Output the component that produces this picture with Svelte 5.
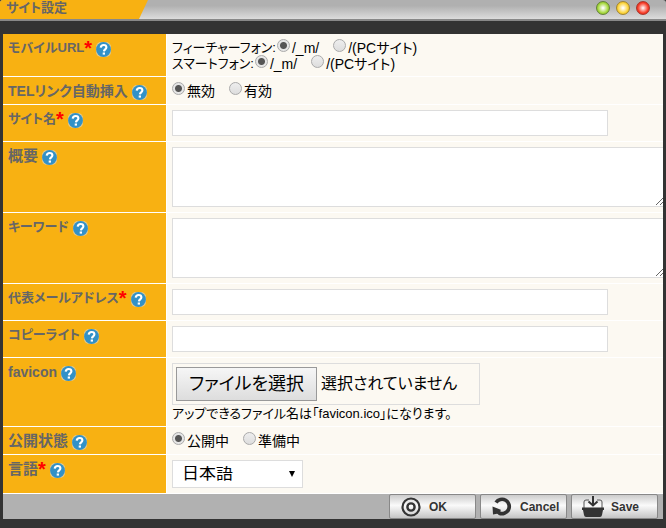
<script lang="ts">
  let mobile = $state("m");
  let smart = $state("m");
  let telLink = $state("off");
  let status = $state("open");
  let fileName = $state("");
  let fileInput: HTMLInputElement;

  const handleFile = () => {
    fileName = fileInput.files?.[0]?.name ?? "";
  };
</script>

{#snippet help()}
  <svg class="help" viewBox="0 0 15 15" aria-hidden="true">
    <rect width="15" height="15" rx="5" fill="#e3c98c" />
    <circle cx="7.5" cy="7.5" r="7.4" fill="#3291c7" />
    <path d="M4.7 5.6C4.9 3.8 6 3 7.6 3c1.7 0 2.8 1 2.8 2.3 0 2-2.3 2-2.5 4" fill="none" stroke="#fff" stroke-width="2.1" />
    <rect x="6.7" y="10.5" width="2.3" height="2.1" fill="#fff" />
  </svg>
{/snippet}

<main>
  <header>
    <h1>サイト設定</h1>
    <div class="lights">
      <button type="button" class="light green" aria-label="最小化"></button>
      <button type="button" class="light yellow" aria-label="最大化"></button>
      <button type="button" class="light red" aria-label="閉じる"></button>
    </div>
  </header>

  <form onsubmit={(e) => e.preventDefault()}>
    <div class="row">
      <div class="label kana">モバイルURL<em>*</em>{@render help()}</div>
      <div class="field">
        <div class="line" role="radiogroup" aria-label="フィーチャーフォン">
          <span class="caption">フィーチャーフォン:</span>
          <label><input type="radio" value="m" bind:group={mobile} />/_m/</label>
          <label><input type="radio" value="pc" bind:group={mobile} />/(PCサイト)</label>
        </div>
        <div class="line" role="radiogroup" aria-label="スマートフォン">
          <span class="caption">スマートフォン:</span>
          <label><input type="radio" value="m" bind:group={smart} />/_m/</label>
          <label><input type="radio" value="pc" bind:group={smart} />/(PCサイト)</label>
        </div>
      </div>
    </div>

    <div class="row">
      <div class="label">TELリンク自動挿入{@render help()}</div>
      <div class="field">
        <div class="line single">
          <label><input type="radio" value="off" bind:group={telLink} />無効</label>
          <label><input type="radio" value="on" bind:group={telLink} />有効</label>
        </div>
      </div>
    </div>

    <div class="row">
      <label class="label kana" for="name">サイト名<em>*</em>{@render help()}</label>
      <div class="field"><input id="name" class="text" type="text" /></div>
    </div>

    <div class="row">
      <label class="label kanji" for="summary">概要{@render help()}</label>
      <div class="field"><textarea id="summary"></textarea></div>
    </div>

    <div class="row">
      <label class="label kana" for="keywords">キーワード{@render help()}</label>
      <div class="field"><textarea id="keywords"></textarea></div>
    </div>

    <div class="row">
      <label class="label kana" for="mail">代表メールアドレス<em>*</em>{@render help()}</label>
      <div class="field"><input id="mail" class="text" type="email" /></div>
    </div>

    <div class="row">
      <label class="label kana" for="copyright">コピーライト{@render help()}</label>
      <div class="field"><input id="copyright" class="text" type="text" /></div>
    </div>

    <div class="row">
      <label class="label" for="favicon">favicon{@render help()}</label>
      <div class="field">
        <div class="file">
          <input id="favicon" type="file" accept=".ico" hidden bind:this={fileInput} onchange={handleFile} />
          <button type="button" onclick={() => fileInput.click()}>ファイルを選択</button>
          <span>{fileName || "選択されていません"}</span>
        </div>
        <div class="line note">アップできるファイル名は「favicon.ico」になります。</div>
      </div>
    </div>

    <div class="row">
      <div class="label kanji">公開状態{@render help()}</div>
      <div class="field">
        <div class="line single">
          <label><input type="radio" value="open" bind:group={status} />公開中</label>
          <label><input type="radio" value="wait" bind:group={status} />準備中</label>
        </div>
      </div>
    </div>

    <div class="row">
      <label class="label kanji" for="lang">言語<em>*</em>{@render help()}</label>
      <div class="field">
        <div class="select">
          <select id="lang">
            <option>日本語</option>
            <option>English</option>
          </select>
        </div>
      </div>
    </div>

    <footer>
      <button type="submit">
        <svg viewBox="0 0 22 22" aria-hidden="true">
          <circle cx="11" cy="11" r="8.5" fill="none" stroke="#333" stroke-width="2.2" />
          <circle cx="11" cy="11" r="3.6" fill="none" stroke="#333" stroke-width="2.4" />
        </svg>
        <span>OK</span>
      </button>
      <button type="button">
        <svg viewBox="0 0 22 22" aria-hidden="true">
          <path d="M5 6.5A7.2 7.2 0 1 1 8 17" fill="none" stroke="#333" stroke-width="3.7" />
          <path d="M1.5 10.5l8.3 3.3-1.300 5-2.500-1-4 .7z" fill="#333" />
        </svg>
        <span>Cancel</span>
      </button>
      <button type="button">
        <svg viewBox="0 0 22 22" aria-hidden="true">
          <path d="M2 12V6q0-2 2-2h3M15 4h3q2 0 2 2v6" fill="none" stroke="#555" stroke-width="1" />
          <path d="M0 11.5h22v2.5h-1l-1 5q-.4 2-2 2H4q-1.6 0-2-2l-1-5H0z" fill="#333" />
          <path d="M11 0v9M6.5 5.5L11 9.5l4.5-4" fill="none" stroke="#333" stroke-width="2" />
        </svg>
        <span>Save</span>
      </button>
    </footer>
  </form>
</main>

<style>
  :global(body) {
    background: #333;
  }

  main {
    font-family: "Liberation Sans", "Noto Sans CJK JP", sans-serif;
    font-feature-settings: "palt";
    font-size: 14px;
    line-height: 16px;
    color: #000;
  }

  header {
    display: flex;
    justify-content: space-between;
    height: 19px;
    border-bottom: 2px solid #888;
    background: linear-gradient(#b0b0b0 0, #b0b0b0 30%, #dcdcdc 100%);
    border-radius: 3px 3px 0 0;
    overflow: hidden;
  }

  h1 {
    box-sizing: border-box;
    width: 148px;
    margin: 0;
    padding-left: 6px;
    background: #f8b112;
    clip-path: polygon(0 0, 100% 0, 139px 100%, 0 100%);
    color: #666;
    font-size: 13px;
    font-weight: 700;
    line-height: 16px;
  }

  .lights {
    display: flex;
    gap: 6px;
    padding: 1px 16px 0 0;
  }

  .light {
    width: 14px;
    height: 14px;
    padding: 0;
    border: 1px solid;
    border-radius: 50%;
  }

  .green {
    border-color: #64803a;
    background: radial-gradient(#fff 5%, #a6d83c 60%, #6b9d18);
  }

  .yellow {
    border-color: #a08532;
    background: radial-gradient(#fff 5%, #fbd43a 60%, #d29a0c);
  }

  .red {
    border-color: #a8362c;
    background: radial-gradient(#fff 0, #f83d28 60%, #c8130a);
  }

  form {
    margin: 13px 3px 0;
  }

  .row {
    display: grid;
    grid-template-columns: 163px 1fr;
    column-gap: 1px;
    border-bottom: 1px solid #fff;
    background: #fff;
  }

  .label {
    display: flex;
    align-items: flex-start;
    padding: 6px 0 0 5px;
    background: #f8b112;
    color: #666;
    font-weight: 700;
  }

  .kana {
    font-size: 13px;
  }

  .kanji {
    font-size: 15px;
  }

  em {
    color: #f00;
    font-size: 20px;
    font-style: normal;
  }

  .help {
    flex: none;
    width: 15px;
    height: 15px;
    margin: 2px 0 0 4px;
  }

  .field {
    padding: 5px 0 5px 5px;
    background: #fcf9f2;
    overflow: hidden;
  }

  .line {
    display: flex;
    gap: 14px;
    height: 16px;
    line-height: 18px;
    white-space: nowrap;
  }

  .single {
    height: 17px;
  }

  .line label {
    display: flex;
    gap: 2px;
  }

  .caption {
    margin-right: -13px;
    font-size: 13px;
  }

  .note {
    font-size: 13px;
  }

  input[type="radio"] {
    appearance: none;
    box-sizing: border-box;
    width: 13px;
    height: 13px;
    margin: 0;
    border: 1px solid #aaa;
    border-radius: 50%;
    background: linear-gradient(#eee, #ddd);
  }

  input[type="radio"]:checked {
    background: radial-gradient(#555 0, #555 3px, #e6e6e6 4px);
  }

  .text,
  textarea,
  select {
    display: block;
    box-sizing: border-box;
    margin: 0;
    border: 1px solid #ddd;
    border-radius: 0;
    background: #fff;
    font: inherit;
  }

  .text {
    width: 436px;
    max-width: 100%;
    height: 26px;
  }

  textarea {
    width: calc(100% + 2px);
    height: 60px;
  }

  .file {
    display: flex;
    align-items: center;
    gap: 4px;
    box-sizing: border-box;
    width: 308px;
    max-width: 100%;
    height: 42px;
    padding: 0 3px;
    border: 1px solid #ddd;
    font-size: 16px;
    white-space: nowrap;
  }

  .file button {
    box-sizing: border-box;
    width: 141px;
    height: 34px;
    padding: 0;
    border: 1px solid #999;
    background: linear-gradient(#f6f6f6, #ddd);
    color: #000;
    font: inherit;
    font-size: 18px;
    font-feature-settings: inherit;
  }

  .select {
    position: relative;
    width: 131px;
  }

  .select::after {
    content: "";
    position: absolute;
    top: 11px;
    right: 8px;
    border: 3px solid transparent;
    border-top: 6px solid #000;
    border-bottom: 0;
    pointer-events: none;
  }

  select {
    appearance: none;
    width: 100%;
    height: 28px;
    padding: 0 20px 0 9px;
    color: #000;
    font-size: 17px;
  }

  footer {
    display: flex;
    justify-content: flex-end;
    gap: 4px;
    padding-right: 5px;
    background: #b1b1b1;
  }

  footer button {
    display: flex;
    align-items: center;
    gap: 7px;
    box-sizing: border-box;
    width: 87px;
    height: 25px;
    padding: 0 0 0 10px;
    border: 1px solid #888;
    border-radius: 2px;
    background: linear-gradient(#ccc, #fafafa 45%, #ececec 60%, #c4c4c4);
    color: #333;
    font: 700 12px "Liberation Sans", Arial, sans-serif;
  }

  footer svg {
    flex: none;
    width: 22px;
    height: 22px;
  }
</style>
